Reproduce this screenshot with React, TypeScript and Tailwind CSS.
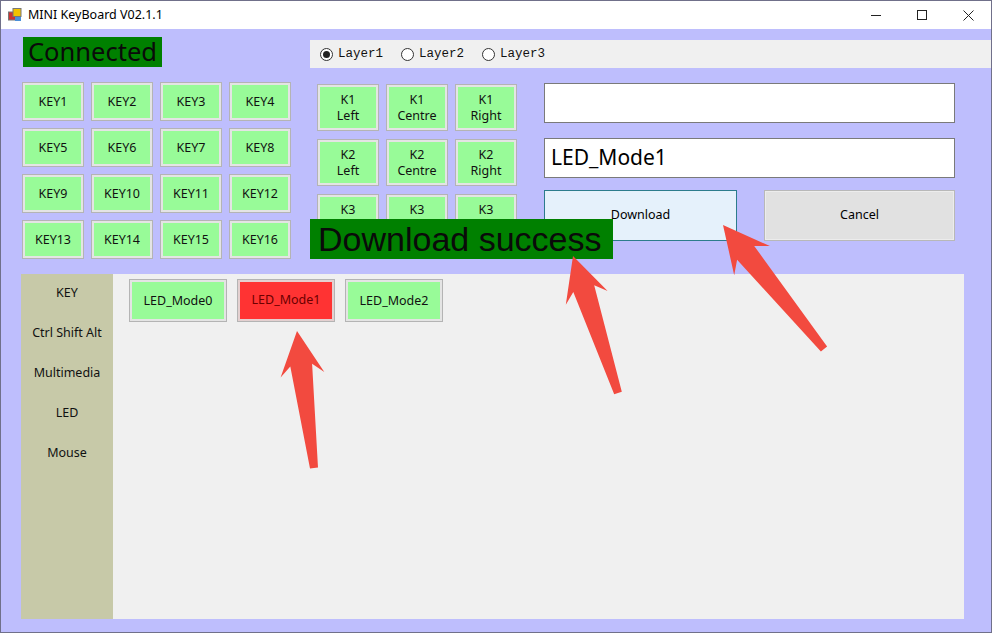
import React from 'react';

const ui = { fontFamily: '"Noto Sans", "Open Sans", sans-serif' };
const mono = { fontFamily: '"Liberation Mono", "DejaVu Sans Mono", monospace' };

const keys = Array.from({ length: 16 }, (_, i) => `KEY${i + 1}`);
const knobs = ['K1', 'K2', 'K3'];
const knobActs = ['Left', 'Centre', 'Right'];
const tabs = ['KEY', 'Ctrl Shift Alt', 'Multimedia', 'LED', 'Mouse'];
const modes = ['LED_Mode0', 'LED_Mode1', 'LED_Mode2'];

type Pt = [number, number];

// red annotation arrow, tip points at the thing
function arrowPoints(tip: Pt, tail: Pt, headLen = 44, headW = 44, w0 = 22, w1 = 8) {
  const dx = tip[0] - tail[0];
  const dy = tip[1] - tail[1];
  const len = Math.hypot(dx, dy);
  const ux = dx / len;
  const uy = dy / len;
  const nx = -uy;
  const ny = ux;
  const at = (d: number, s: number): Pt => [tip[0] - ux * d + nx * s, tip[1] - uy * d + ny * s];
  const pts: Pt[] = [
    tip,
    at(headLen, headW / 2),
    at(headLen * 0.78, w0 / 2),
    [tail[0] + nx * (w1 / 2), tail[1] + ny * (w1 / 2)],
    [tail[0] - nx * (w1 / 2), tail[1] - ny * (w1 / 2)],
    at(headLen * 0.78, -w0 / 2),
    at(headLen, -headW / 2),
  ];
  return pts.map((p) => `${p[0].toFixed(1)},${p[1].toFixed(1)}`).join(' ');
}

function GreenBtn({ children, className = '' }: { children: React.ReactNode; className?: string }) {
  return (
    <div
      className={`flex items-center justify-center text-center border border-[#b4b4b4] bg-[#98fb98] shadow-[inset_0_0_0_2px_#e4e4e4] text-[12.5px] leading-[16px] text-[#111] ${className}`}
    >
      {children}
    </div>
  );
}

function Radio({ checked, label }: { checked?: boolean; label: string }) {
  return (
    <div className="flex items-center gap-[5px]">
      <span className="w-[13px] h-[13px] rounded-full border border-[#333] bg-white flex items-center justify-center">
        {checked && <span className="w-[7px] h-[7px] rounded-full bg-[#222]" />}
      </span>
      <span className="text-[12.5px] text-[#111]" style={mono}>
        {label}
      </span>
    </div>
  );
}

export default function App() {
  return (
    <div className="relative w-[992px] h-[633px] overflow-hidden bg-[#bebefd] border border-[#70708a]" style={ui}>
      {/* title bar */}
      <div className="h-[28px] bg-white flex items-center">
        <svg width="14" height="14" viewBox="0 0 14 14" className="ml-[7px] mr-[6px]">
          <rect x="0.5" y="4" width="7" height="8" fill="#c33" stroke="#777" />
          <rect x="5" y="0.5" width="8" height="8" fill="#f2c200" stroke="#777" />
          <rect x="7" y="9" width="6" height="4" fill="#4a8fd8" />
        </svg>
        <span className="text-[12.5px] text-black">MINI KeyBoard V02.1.1</span>
        <div className="ml-auto flex items-center h-full">
          <div className="w-[46px] flex justify-center">
            <svg width="10" height="10" viewBox="0 0 10 10"><path d="M0 5.5h10" stroke="#222" strokeWidth="1" /></svg>
          </div>
          <div className="w-[46px] flex justify-center">
            <svg width="10" height="10" viewBox="0 0 10 10"><rect x="0.5" y="0.5" width="9" height="9" fill="none" stroke="#222" /></svg>
          </div>
          <div className="w-[46px] flex justify-center">
            <svg width="11" height="11" viewBox="0 0 11 11"><path d="M0.5 0.5l10 10M10.5 0.5l-10 10" stroke="#222" /></svg>
          </div>
        </div>
      </div>

      {/* top area */}
      <div className="flex h-[245px]">
        <div className="w-[309px] pl-[22px] pt-[8px]">
          <div className="w-[139px] h-[30px] bg-[#008000] flex items-center pl-[5px] text-[25.5px] leading-none text-[#0a0a0a]">
            Connected
          </div>
          <div className="grid grid-cols-[repeat(4,62px)] grid-rows-[repeat(4,39px)] gap-x-[7px] gap-y-[7px] mt-[15px] -ml-[1px]">
            {keys.map((k) => (
              <GreenBtn key={k}>{k}</GreenBtn>
            ))}
          </div>
        </div>

        <div className="flex-1 pt-[11px]">
          <div className="h-[28px] bg-[#f0f0f0] flex items-center gap-[18px] pl-[10px]">
            <Radio checked label="Layer1" />
            <Radio label="Layer2" />
            <Radio label="Layer3" />
          </div>

          <div className="flex mt-[16px]">
            <div className="w-[234px] pl-[7px] grid grid-cols-[repeat(3,62px)] grid-rows-[repeat(3,47px)] gap-x-[7px] gap-y-[8px]">
              {knobs.map((k) =>
                knobActs.map((a) => (
                  <GreenBtn key={k + a} className="flex-col">
                    <span>{k}</span>
                    <span>{a}</span>
                  </GreenBtn>
                )),
              )}
            </div>

            <div className="w-[411px] -mt-[1px]">
              <div className="h-[40px] bg-white border border-[#7a7a7a]" />
              <div className="h-[40px] bg-white border border-[#7a7a7a] mt-[15px] flex items-center pl-[6px] text-[21px] text-black">
                LED_Mode1
              </div>
              <div className="flex gap-[27px] mt-[12px]">
                <div className="w-[193px] h-[51px] bg-[#e5f1fb] border border-[#2c7c8c] flex items-center justify-center text-[12.5px] text-black">
                  Download
                </div>
                <div className="w-[191px] h-[51px] bg-[#e1e1e1] border border-[#b8b8b8] shadow-[inset_0_0_0_1px_#ececec] flex items-center justify-center text-[12.5px] text-black">
                  Cancel
                </div>
              </div>
            </div>
          </div>
        </div>
      </div>

      {/* tab panel */}
      <div className="ml-[20px] w-[943px] h-[345px] flex">
        <div className="w-[92px] bg-[#c7c9a8] flex flex-col items-center pt-[9px]">
          {tabs.map((t) => (
            <div key={t} className="h-[40px] text-[12.5px] text-[#111] pt-[1px]">
              {t}
            </div>
          ))}
        </div>
        <div className="flex-1 bg-[#f0f0f0] flex gap-[10px] pl-[16px] pt-[5px] items-start">
          {modes.map((m, i) =>
            i === 1 ? (
              <div
                key={m}
                className="w-[98px] h-[43px] flex items-center justify-center border border-[#b4b4b4] bg-[#ff3333] shadow-[inset_0_0_0_2px_#e4d0d0] text-[12.5px] text-[#6b0000]"
              >
                {m}
              </div>
            ) : (
              <GreenBtn key={m} className="w-[98px] h-[43px]">
                {m}
              </GreenBtn>
            ),
          )}
        </div>
      </div>

      {/* status label lying over the knob buttons */}
      <div
        className="absolute left-[309px] top-[218px] w-[303px] h-[40px] bg-[#008000] flex items-center pl-[8px] text-[34px] leading-none text-[#0a0a0a]"
        style={{ fontFamily: '"Liberation Sans", Arial, sans-serif' }}
      >
        Download success
      </div>

      {/* annotation arrows */}
      <svg className="absolute inset-0 pointer-events-none" width="992" height="633">
        <polygon points={arrowPoints([296, 330], [313, 467])} fill="#f24a3f" />
        <polygon points={arrowPoints([572, 255], [617, 392])} fill="#f24a3f" />
        <polygon points={arrowPoints([722, 224], [823, 348], 46, 46)} fill="#f24a3f" />
      </svg>
    </div>
  );
}
